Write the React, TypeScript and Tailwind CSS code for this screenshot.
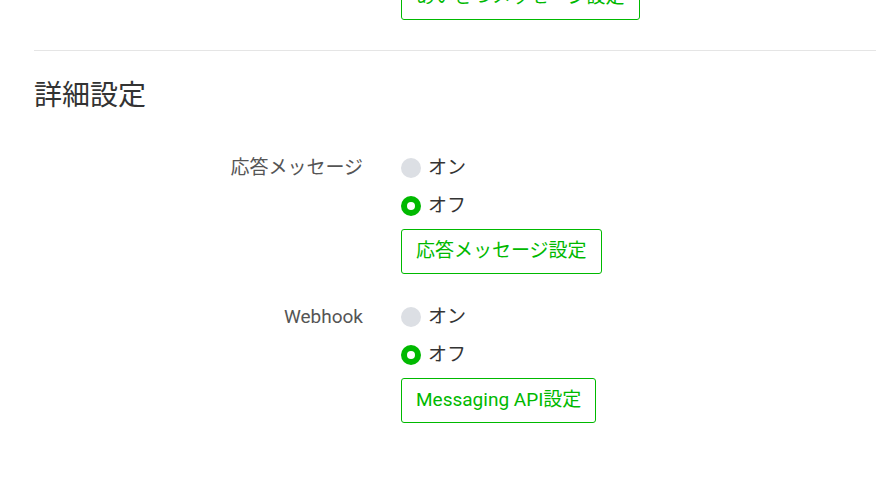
import React from 'react';

const font = { fontFamily: 'Roboto, "Noto Sans CJK JP", sans-serif' };

const Radio: React.FC<{ checked?: boolean; label: string }> = ({ checked, label }) => (
  <div className="flex h-[30px] items-center gap-[7px]">
    {checked ? (
      <span className="flex h-5 w-5 items-center justify-center rounded-full bg-[#00b900]">
        <span className="h-2 w-2 rounded-full bg-white" />
      </span>
    ) : (
      <span className="h-5 w-5 rounded-full bg-[#dcdfe4]" />
    )}
    <span className="text-[19px] text-[#333]">{label}</span>
  </div>
);

const GreenButton: React.FC<{ children: React.ReactNode; className?: string }> = ({ children, className = '' }) => (
  <button
    className={`inline-flex h-[45px] items-center rounded-[3px] border border-[#00b900] bg-white px-[14px] text-[19px] text-[#00b900] ${className}`}
  >
    {children}
  </button>
);

const SettingRow: React.FC<{ label: string; value: boolean; button: string }> = ({ label, value, button }) => (
  <div className="flex">
    {/* label column, right aligned */}
    <div className="flex h-[30px] w-[363px] items-center justify-end text-[19px] text-[#555]">{label}</div>
    <div className="ml-[38px] flex flex-col items-start">
      <div className="flex flex-col gap-2">
        <Radio label="オン" checked={value} />
        <Radio label="オフ" checked={!value} />
      </div>
      <GreenButton className="mt-2">{button}</GreenButton>
    </div>
  </div>
);

export default function App() {
  return (
    <div className="h-[501px] w-[876px] overflow-hidden bg-white" style={font}>
      <div className="mt-[-25px] pl-[401px]">
        <GreenButton>あいさつメッセージ設定</GreenButton>
      </div>
      <div className="ml-[34px] mt-[30px] h-px bg-[#e5e5e5]" />

      <h2 className="ml-[34px] mt-[26px] text-[28px] leading-[38px] text-[#333]">詳細設定</h2>

      <div className="mt-[38px] flex flex-col gap-[28px]">
        <SettingRow label="応答メッセージ" value={false} button="応答メッセージ設定" />
        <SettingRow label="Webhook" value={false} button="Messaging API設定" />
      </div>
    </div>
  );
}
